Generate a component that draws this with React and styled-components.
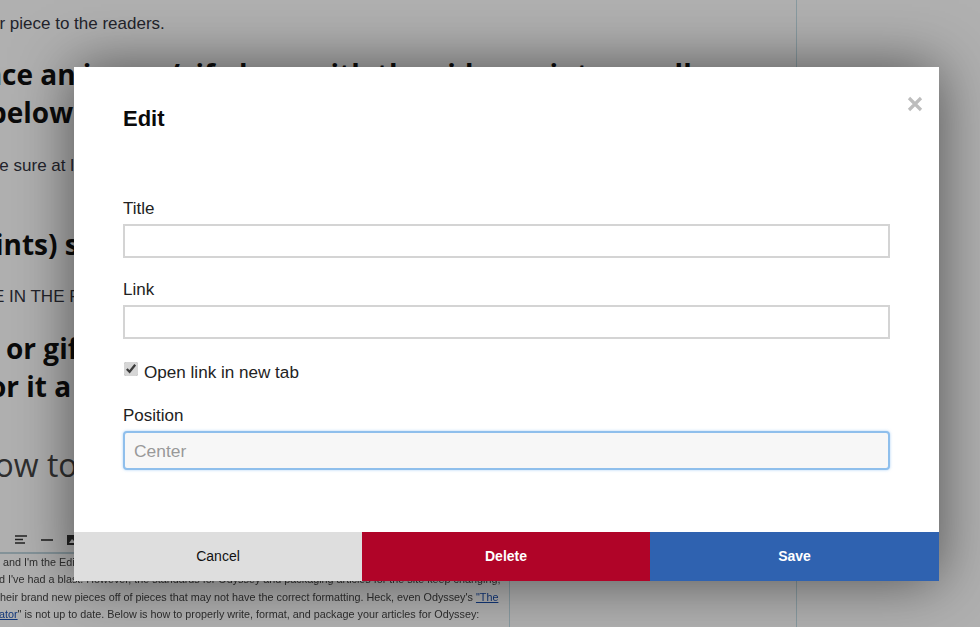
import React from "react";
import styled, { createGlobalStyle } from "styled-components";

const Global = createGlobalStyle`
  html, body { margin: 0; padding: 0; background: #fff; }
  body { font-family: "Liberation Sans", Arial, sans-serif; }
`;
const Page = styled.div`
  position: relative;
  width: 980px;
  height: 627px;
  overflow: hidden;
  background: #fff;
`;
const Article = styled.div`
  box-sizing: border-box;
  width: 797px;
  height: 627px;
  padding-top: 13px;
  border-right: 1px solid #c5dfe8;
  overflow: hidden;
  color: #33343f;
`;
const Para = styled.p`
  margin: ${(p) => p.$top}px 0 0 ${(p) => p.$left}px;
  font-size: 17px;
  line-height: 22px;
  white-space: nowrap;
`;
const Heading = styled.h2`
  margin: ${(p) => p.$top}px 0 0 ${(p) => p.$left}px;
  font-family: "Open Sans", sans-serif;
  font-weight: 700;
  font-size: 28px;
  line-height: 38px;
  color: #111;
  white-space: nowrap;
`;
const Lead = styled.h1`
  margin: 38px 0 0 -29px;
  font-family: "Open Sans", sans-serif;
  font-weight: 400;
  font-size: 32px;
  line-height: 44px;
  color: #444;
  white-space: nowrap;
`;
const Toolbar = styled.div`
  display: flex;
  align-items: center;
  gap: 14px;
  height: 22px;
  margin: 42px 0 0 15px;
  color: #333;
  filter: blur(0.4px);
`;
const Editor = styled.div`
  box-sizing: border-box;
  width: 510px;
  height: 90px;
  margin-top: 1px;
  border-top: 2px solid #bfd5de;
  border-right: 1px solid #c5dfe8;
`;
const EditorLine = styled.div`
  margin-left: ${(p) => p.$left}px;
  font-size: 10.8px;
  line-height: 17.3px;
  white-space: nowrap;
  color: #444;
  filter: blur(0.7px);
  a { color: #1a4fb0; text-decoration: underline; }
`;
const Overlay = styled.div`
  position: absolute;
  inset: 0;
  background: rgba(0, 0, 0, 0.31);
`;
const Modal = styled.div`
  position: relative;
  width: 865px;
  height: 514px;
  margin: 67px 0 0 74px;
  display: flex;
  flex-direction: column;
  background: #fff;
  box-shadow: 0 0 55px rgba(0, 0, 0, 0.55);
`;
const Close = styled.button`
  position: absolute;
  top: 28px;
  right: 15px;
  width: 18px;
  height: 18px;
  padding: 0;
  border: 0;
  background: none;
  color: #bdbdbd;
  display: flex;
`;
const Body = styled.div`
  flex: 1;
  padding: 40px 49px 0;
`;
const Title = styled.h3`
  margin: 0 0 66px;
  font-size: 22px;
  line-height: 24px;
  font-weight: 700;
  color: #0a0a0a;
`;
const Label = styled.label`
  display: block;
  height: 24px;
  margin-top: ${(p) => p.$top || 0}px;
  font-size: 17px;
  line-height: 24px;
  color: #222;
`;
const TextInput = styled.input`
  display: block;
  box-sizing: border-box;
  width: 767px;
  height: 34px;
  margin-top: 3px;
  padding: 0 10px;
  border: 2px solid #d4d4d4;
  background: #fff;
  outline: none;
`;
const PositionInput = styled.input`
  display: block;
  box-sizing: border-box;
  width: 767px;
  height: 39px;
  margin-top: 3px;
  padding: 1px 9px 0;
  border: 2px solid #8fbfec;
  border-radius: 4px;
  background: #f7f7f7;
  box-shadow: 0 0 3px rgba(120, 180, 240, 0.6);
  outline: none;
  font-family: inherit;
  font-size: 17.4px;
  &::placeholder { color: #999; opacity: 1; }
`;
const CheckRow = styled.label`
  display: flex;
  align-items: center;
  height: 24px;
  margin-top: 22px;
  font-size: 17.1px;
  color: #222;
`;
const Check = styled.input`
  width: 14px;
  height: 14px;
  margin: -8px 6px 0 1px;
  accent-color: #d6d6d6;
`;
const Footer = styled.div`
  display: grid;
  grid-template-columns: 288px 288px 1fr;
  height: 49px;
`;
const FooterButton = styled.button`
  border: 0;
  padding: 0 0 2px;
  font-family: inherit;
  font-size: 14px;
  font-weight: ${(p) => (p.$primary ? 700 : 400)};
  color: ${(p) => (p.$primary ? "#fff" : "#111")};
  background: ${(p) => p.$bg};
`;

export default function App() {
  return (
    <Page>
      <Global />
      <Article>
        <Para $top={0} $left={-28}>your piece to the readers.</Para>
        <Heading $top={20} $left={-41}>Place an image/gif along with the video point as well</Heading>
        <Heading $top={0} $left={-11}>below</Heading>
        <Para $top={24} $left={-12}>Be sure at least</Para>
        <Heading $top={48} $left={-5}>ints) size</Heading>
        <Para $top={23} $left={-7}>E IN THE FIRST</Para>
        <Heading $top={21} $left={6}>or gifs</Heading>
        <Heading $top={0} $left={-11}>or it a</Heading>
        <Lead>How to</Lead>
        <Toolbar>
          <svg width="12" height="10" viewBox="0 0 12 10"><path d="M0 1h12M0 4.5h8M0 8h10" stroke="currentColor" strokeWidth="1.6" /></svg>
          <svg width="12" height="10" viewBox="0 0 12 10"><path d="M0 5h12" stroke="currentColor" strokeWidth="1.6" /></svg>
          <svg width="12" height="10" viewBox="0 0 12 10"><path d="M0 0h12v10H0zM2 8l3-4 2 2 1-1 2 3z" fill="currentColor" fillRule="evenodd" /></svg>
        </Toolbar>
        <Editor>
          <EditorLine $left={3}>and I'm the Editor-in-Chief of The Odyssey at this university.</EditorLine>
          <EditorLine $left={-1}>d I've had a blast. However, the standards for Odyssey and packaging articles for the site keep changing,</EditorLine>
          <EditorLine $left={0}>heir brand new pieces off of pieces that may not have the correct formatting. Heck, even Odyssey's <a>"The</a></EditorLine>
          <EditorLine $left={-1}><a>ator</a>" is not up to date. Below is how to properly write, format, and package your articles for Odyssey:</EditorLine>
        </Editor>
      </Article>
      <Overlay>
        <Modal>
          <Close aria-label="Close">
            <svg width="18" height="18" viewBox="0 0 18 18">
              <path d="M3 3l12 12M15 3L3 15" stroke="currentColor" strokeWidth="3.2" />
            </svg>
          </Close>
          <Body>
            <Title>Edit</Title>
            <Label>Title</Label>
            <TextInput />
            <Label $top={20}>Link</Label>
            <TextInput />
            <CheckRow>
              <Check type="checkbox" checked readOnly />
              Open link in new tab
            </CheckRow>
            <Label $top={19}>Position</Label>
            <PositionInput placeholder="Center" />
          </Body>
          <Footer>
            <FooterButton $bg="#dedede">Cancel</FooterButton>
            <FooterButton $bg="#b00428" $primary>Delete</FooterButton>
            <FooterButton $bg="#2f62b0" $primary>Save</FooterButton>
          </Footer>
        </Modal>
      </Overlay>
    </Page>
  );
}
